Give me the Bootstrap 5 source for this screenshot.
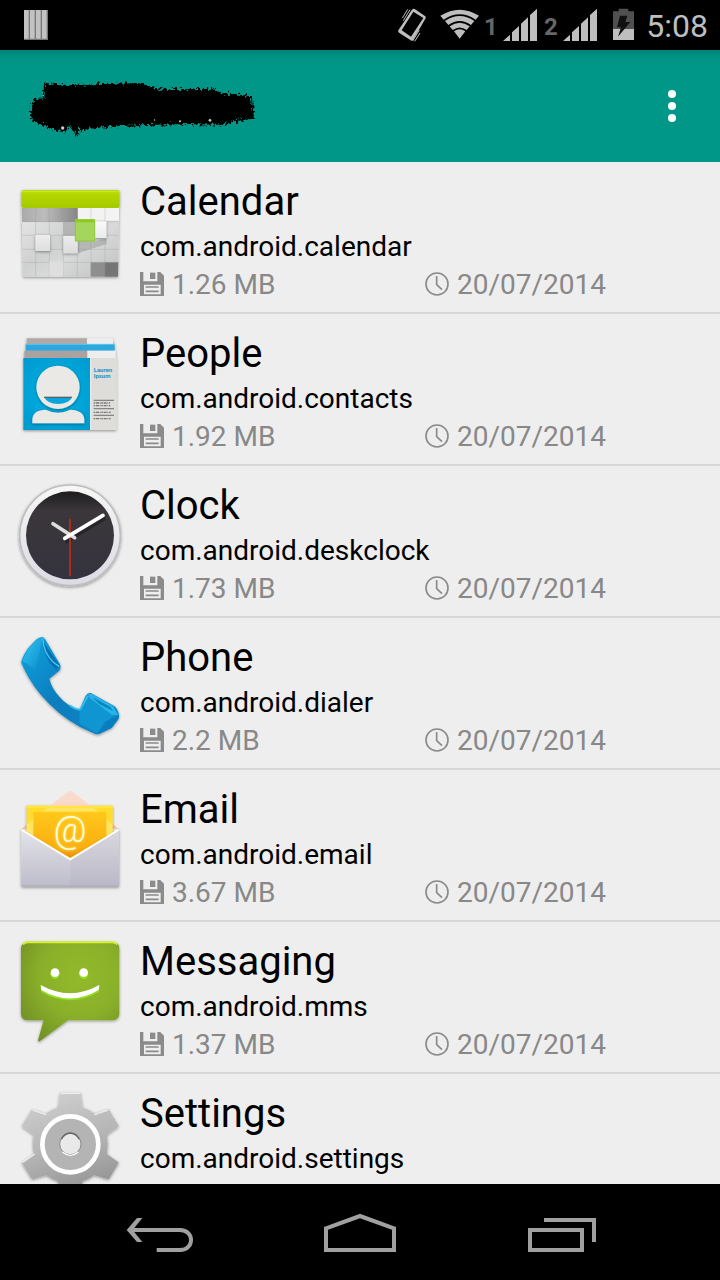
<!DOCTYPE html>
<html lang="en">
<head>
<meta charset="utf-8">
<meta name="viewport" content="width=device-width, initial-scale=1">
<title>Installed apps</title>
<link rel="stylesheet" href="https://cdn.jsdelivr.net/npm/bootstrap@5.3.0/dist/css/bootstrap.min.css">
<style>
body { font-family: Roboto, "Noto Sans", sans-serif; background: #eee; }
svg { display: block; flex: none; overflow: visible; }
.status-bar { background: #000; color: #bebebe; height: 50px; padding: 0 12px 0 24px; }
.status-icon { height: 50px; fill: #bebebe; }
.sim-label { width: 25px; font-size: 24px; line-height: 30px; padding-top: 4px; color: #666; }
.status-time { font-size: 32px; line-height: 50px; padding-top: 1px; margin-left: 12px; }
.wifi-icon { margin-left: 14px; }
.battery-icon { margin-left: 15px; }
.app-bar { background: linear-gradient(#008378, #009485 8px, #009788 24px); height: 112px; padding: 0 24px 0 28px; }
.overflow-btn { width: 48px; height: 48px; }
.app-list { min-height: 0; overflow-y: auto; scrollbar-width: none; }
.app-list::-webkit-scrollbar { display: none; }
.app-row { min-height: 152px; padding: 15px 10px 9px 0; border-bottom: 2px solid #d6d6d6; color: #000; }
.app-icon { width: 120px; height: 120px; margin: -5px 10px 0; }
.app-name { font-size: 40px; line-height: 50px; font-weight: 400; }
.app-package { font-size: 28px; line-height: 40px; }
.app-meta { font-size: 28px; line-height: 36px; color: #888; }
.meta-icon { width: 24px; height: 24px; margin-bottom: 2px; }
.nav-bar { background: #000; height: 96px; padding: 0 60px; }
.nav-bar svg { width: 80px; height: 56px; fill: none; stroke: #a0a0a0; stroke-width: 12; }
</style>
<script src="https://cdn.jsdelivr.net/npm/bootstrap@5.3.0/dist/js/bootstrap.bundle.min.js"></script>
</head>
<body>
<svg width="0" height="0" class="position-absolute" aria-hidden="true">
  <defs>
    <symbol id="disk" viewBox="0 0 72 72">
      <path fill="#8b8b8b" fill-rule="evenodd" d="M0 0H8V28H54V0H60L72 12V72H0ZM12 38V67H62V38Z"/>
      <path fill="#8b8b8b" fill-rule="evenodd" d="M30 2H46V21H30Z"/>
      <path fill="#8b8b8b" d="M0 0H10V30H0ZM52 0H60L72 12V30H52Z"/>
      <path stroke="#8b8b8b" stroke-width="5" d="M17 45H56M17 58H56"/>
    </symbol>
    <symbol id="time" viewBox="0 0 72 72">
      <circle cx="36" cy="36" r="33" fill="none" stroke="#8b8b8b" stroke-width="5"/>
      <path fill="none" stroke="#8b8b8b" stroke-width="5" d="M35 12V38L51 53"/>
    </symbol>
    <filter id="soft" x="-20%" y="-20%" width="140%" height="140%"><feDropShadow dx="0" dy="3" stdDeviation="4" flood-opacity=".4"/></filter>
    <filter id="glow" x="-30%" y="-30%" width="160%" height="160%"><feDropShadow dx="0" dy="0" stdDeviation="5" flood-color="#fff35a" flood-opacity="1"/></filter>
    <filter id="rough" x="-5%" y="-20%" width="110%" height="140%"><feTurbulence type="fractalNoise" baseFrequency=".12" numOctaves="3" seed="4"/><feDisplacementMap in="SourceGraphic" scale="26" xChannelSelector="R" yChannelSelector="G"/><feGaussianBlur stdDeviation="2"/></filter>
    <linearGradient id="lime" x2="0" y2="1"><stop stop-color="#b9dc00"/><stop offset="1" stop-color="#a5c900"/></linearGradient>
    <linearGradient id="paper" x2="0" y2="1"><stop stop-color="#fafafa"/><stop offset="1" stop-color="#dcdcdc"/></linearGradient>
    <linearGradient id="grid" x2="1" y2="1"><stop stop-color="#e9e9e9"/><stop offset=".45" stop-color="#cfd1d0"/><stop offset=".6" stop-color="#d8dad9"/><stop offset="1" stop-color="#bfc2c0"/></linearGradient>
    <linearGradient id="band" x2="1" y2="0"><stop stop-color="#aaa"/><stop offset=".4" stop-color="#bcbcbc"/><stop offset="1" stop-color="#868686"/></linearGradient>
    <radialGradient id="sky" cx=".5" cy=".5" r=".75"><stop stop-color="#05b4e6"/><stop offset="1" stop-color="#0397cc"/></radialGradient>
    <linearGradient id="rim" x2="0" y2="1"><stop stop-color="#f7f7f5"/><stop offset="1" stop-color="#dcdae4"/></linearGradient>
    <linearGradient id="dial" x2="0" y2="1"><stop stop-color="#1d1b1e"/><stop offset=".22" stop-color="#3b373b"/><stop offset="1" stop-color="#34323d"/></linearGradient>
    <linearGradient id="phoneBody" x2="1" y2="1"><stop stop-color="#11a3df"/><stop offset=".5" stop-color="#087dbd"/><stop offset="1" stop-color="#0987c8"/></linearGradient>
    <linearGradient id="phoneLit" x2="1" y2="1"><stop stop-color="#35c8f4"/><stop offset="1" stop-color="#0b8cca"/></linearGradient>
    <linearGradient id="letter" x2="0" y2="1"><stop stop-color="#ffc81a"/><stop offset=".8" stop-color="#fbae10"/><stop offset="1" stop-color="#e88d0c"/></linearGradient>
    <linearGradient id="flap" x2="0" y2="1"><stop stop-color="#ebe6e5"/><stop offset=".4" stop-color="#fbd8c8"/><stop offset="1" stop-color="#f5c4a6"/></linearGradient>
    <linearGradient id="envelope" x2="0" y2="1"><stop stop-color="#e4e4ea"/><stop offset="1" stop-color="#bdbcca"/></linearGradient>
    <radialGradient id="bubble" cx=".6" cy=".35" r=".8"><stop stop-color="#93b92c"/><stop offset=".5" stop-color="#8ab02a"/><stop offset="1" stop-color="#6d8b24"/></radialGradient>
    <linearGradient id="steel" gradientUnits="userSpaceOnUse" x1="150" y1="38" x2="250" y2="348"><stop stop-color="#cfcfcf"/><stop offset=".5" stop-color="#b5b5b5"/><stop offset="1" stop-color="#919191"/></linearGradient>
  </defs>
</svg>

<div class="d-flex flex-column vh-100 overflow-hidden">
  <div class="status-bar d-flex align-items-center flex-shrink-0">
    <svg class="me-auto" width="24" height="30" viewBox="0 0 72 90" aria-hidden="true">
      <path fill="#777" d="M0 0H72V90H0Z"/>
      <path fill="#c2c2c2" d="M0 0H14V86H0ZM18 0H32V86H18ZM36 0H50V86H36ZM54 0H68V86H54Z"/>
    </svg>
    <svg class="status-icon" width="28" viewBox="54 0 84 150" aria-hidden="true">
      <path fill-rule="evenodd" d="M98 27Q101 25 104 27L135 48Q139 51 137 55L99 120Q96 124 92 121L57 98Q53 95 55 91ZM100 35L65 91L93 110L130 54Z"/>
      <path fill="none" stroke="#bebebe" stroke-width="3" d="M67 54L83 28M70 62L90 29M72 72L96 31M98 123L118 90M104 124L120 99M95 119L115 85"/>
    </svg>
    <svg class="status-icon wifi-icon" width="38" viewBox="180 0 114 150" aria-hidden="true">
      <path d="M181 47Q239 11 297 47L287 59Q239 27 191 59ZM195 63Q239 33 283 63L273 75Q239 51 205 75ZM209 79Q239 57 269 79L260 90Q239 75 218 90ZM222 94Q239 82 256 94L239 116Z"/>
    </svg>
    <span class="sim-label fw-bold text-center">1</span>
    <svg class="status-icon" width="35" viewBox="369 0 105 150" aria-hidden="true">
      <path d="M369 123L390 104V123ZM396 97L417 78V123H396ZM423 71L444 52V123H423ZM450 45L471 26V123H450Z"/>
    </svg>
    <span class="sim-label fw-bold text-center">2</span>
    <svg class="status-icon" width="35" viewBox="369 0 105 150" aria-hidden="true">
      <path d="M369 123L390 104V123ZM396 97L417 78V123H396ZM423 71L444 52V123H423ZM450 45L471 26V123H450Z"/>
    </svg>
    <svg class="status-icon battery-icon" width="21" viewBox="699 0 63 150" aria-hidden="true">
      <path fill="#505050" d="M699 34H716V26H745V34H762V87H699Z"/><path d="M699 87H762V120H699Z"/>
      <path fill="#111" d="M720 47H742L736 66H751L714 110L723 82H711Z"/>
    </svg>
    <span class="status-time">5:08</span>
  </div>

  <header class="app-bar d-flex align-items-center justify-content-between flex-shrink-0">
    <svg width="232" height="60" viewBox="84 228 696 180" aria-hidden="true">
      <path filter="url(#rough)" d="M135 249L210 256L300 252L420 250L470 266L560 268L640 266L665 280L752 287L762 356L700 364L660 374L560 372L460 374L360 378L290 384L240 390L234 408L205 372L198 394L155 388L98 364L92 330L100 298L130 294Z"/>
      <path stroke="#000" stroke-width="3" d="M135 247L130 290M754 288L760 356M205 374L234 408"/>
      <g fill="#d9c5c5"><circle cx="188" cy="384" r="5"/><circle cx="540" cy="364" r="3"/><circle cx="630" cy="361" r="4"/><circle cx="130" cy="287" r="2"/><circle cx="464" cy="360" r="2"/></g>
    </svg>
    <button type="button" class="overflow-btn btn p-0 border-0 d-flex align-items-center justify-content-center" aria-label="More options">
      <svg width="8" height="32" viewBox="0 0 8 32" fill="#fff"><circle cx="4" cy="4" r="4"/><circle cx="4" cy="16" r="4"/><circle cx="4" cy="28" r="4"/></svg>
    </button>
  </header>

  <main class="app-list flex-grow-1">
    <a href="#calendar" class="app-row d-flex align-items-start text-decoration-none">
      <svg class="app-icon" viewBox="30 6 360 360" aria-hidden="true">
        <g filter="url(#soft)"><path fill="url(#grid)" d="M65 112H357L354 320H69Z"/><rect x="64" y="60" width="295" height="54" rx="6" fill="url(#lime)"/></g>
        <path d="M66 65H357" stroke="#c8e93c" stroke-width="3"/>
        <path fill="url(#band)" d="M65 114H233V156H66Z"/><path fill="#f3f3f3" d="M234 114H357V152H234Z"/>
        <path fill="#8f8f8f" opacity=".45" d="M190 156H228V196H190ZM234 212L282 214L320 206V222L234 250Z"/>
        <path fill="#8e8e8e" d="M272 277H313V320H272Z"/><path fill="#757575" d="M313 277H355L354 320H313Z"/>
        <path stroke="#999" stroke-opacity=".45" stroke-width="2" d="M107 114V320M148 114V320M190 114V320M232 114V320M273 114V320M315 114V320M67 155H356M67 196H356M67 238H356M67 277H356"/>
        <g fill="url(#paper)" filter="url(#soft)"><path d="M106 195H150V243H106ZM190 198H233V250H190ZM284 154H319V204H284Z"/></g>
        <path fill="#dedede" d="M148 274H190V320H148Z"/>
        <rect x="226" y="149" width="58" height="64" fill="#a5d65c" stroke="#8cc932" stroke-width="3"/><path fill="#8bcb1c" d="M225 149H284V157H225Z"/>
      </svg>
      <div class="flex-grow-1">
        <div class="app-name">Calendar</div>
        <div class="app-package">com.android.calendar</div>
        <div class="app-meta row g-0">
          <div class="col-6 d-flex align-items-center gap-2"><svg class="meta-icon"><use href="#disk"/></svg>1.26 MB</div>
          <div class="col-6 d-flex align-items-center gap-2"><svg class="meta-icon"><use href="#time"/></svg>20/07/2014</div>
        </div>
      </div>
    </a>
    <a href="#people" class="app-row d-flex align-items-start text-decoration-none">
      <svg class="app-icon" viewBox="30 -3 360 360" aria-hidden="true">
        <g filter="url(#soft)"><path fill="#b1a8a8" d="M80 40H262V60H80Z"/><path fill="#eee" d="M261 40H339V60H261Z"/><path fill="#2da7dc" d="M77 57H344V77H77Z"/><path fill="#aaa1a1" d="M73 77H263V100H73Z"/><path fill="#eee" d="M262 77H347V100H262Z"/><path fill="#deddd9" d="M270 99H349V315H270Z"/><path fill="url(#sky)" d="M70 99H271V315H70Z"/></g>
        <path stroke="#5cc8f2" stroke-width="3" d="M77 58H344"/>
        <g fill="#ebe9e6" filter="url(#soft)"><circle cx="174" cy="187" r="65"/><path d="M97 295V283Q99 255 137 254Q174 272 211 254Q251 256 253 283V295Z"/></g>
        <path fill="#0aa5dc" d="M133 217H216Q207 237 174 237Q142 237 133 217Z"/><path stroke="#53626c" stroke-width="4" d="M132 217H216"/>
        <path stroke="#f4f2ef" stroke-width="3" d="M272 100V314"/>
        <g font-weight="700" font-size="18" fill="#2492bd"><text x="281" y="140">Lauren</text><text x="281" y="159">Ipsum</text></g>
        <path stroke="#858585" stroke-width="4" d="M281 226H342M281 251H342M281 271H342"/>
        <path stroke="#777" stroke-width="4" stroke-dasharray="5 2 9 2 3 2" d="M281 234H330M281 242H331M281 262H333M281 281H334"/>
      </svg>
      <div class="flex-grow-1">
        <div class="app-name">People</div>
        <div class="app-package">com.android.contacts</div>
        <div class="app-meta row g-0">
          <div class="col-6 d-flex align-items-center gap-2"><svg class="meta-icon"><use href="#disk"/></svg>1.92 MB</div>
          <div class="col-6 d-flex align-items-center gap-2"><svg class="meta-icon"><use href="#time"/></svg>20/07/2014</div>
        </div>
      </div>
    </a>
    <a href="#clock" class="app-row d-flex align-items-start text-decoration-none">
      <svg class="app-icon" viewBox="30 3 360 360" aria-hidden="true">
        <circle cx="210" cy="181" r="151" fill="url(#rim)" stroke="#bdbdbd" stroke-width="5" filter="url(#soft)"/>
        <circle cx="210" cy="181" r="132" fill="url(#dial)"/>
        <path stroke="#000" stroke-opacity=".3" stroke-width="10" stroke-linecap="round" d="M200 200L312 132"/>
        <path stroke="#aa2c1c" stroke-width="6" d="M210 131V303"/>
        <path stroke="#dedede" stroke-width="11" stroke-linecap="round" d="M159 146L224 188"/>
        <path stroke="#fff" stroke-width="11" stroke-linecap="round" d="M194 190L309 121"/>
      </svg>
      <div class="flex-grow-1">
        <div class="app-name">Clock</div>
        <div class="app-package">com.android.deskclock</div>
        <div class="app-meta row g-0">
          <div class="col-6 d-flex align-items-center gap-2"><svg class="meta-icon"><use href="#disk"/></svg>1.73 MB</div>
          <div class="col-6 d-flex align-items-center gap-2"><svg class="meta-icon"><use href="#time"/></svg>20/07/2014</div>
        </div>
      </div>
    </a>
    <a href="#phone" class="app-row d-flex align-items-start text-decoration-none">
      <svg class="app-icon" viewBox="30 3 360 360" aria-hidden="true">
        <path filter="url(#soft)" fill="url(#phoneBody)" d="M127 30Q133 32 137 39L180 112Q184 124 178 131L148 155Q155 184 179 210Q202 238 239 248L257 207Q262 197 272 198L341 236Q352 242 357 263Q359 270 355 276L335 303L300 320Q292 323 284 320L240 300Q173 264 121 202Q86 160 64 108Q63 96 84 64L108 38Q118 30 127 30Z"/>
        <path fill="url(#phoneLit)" d="M67 101L86 64L108 39L126 32L123 55L112 103L105 127Z"/>
        <path fill="#0a6fb0" d="M126 40L177 113L170 129L150 109Q132 82 126 40Z"/>
        <path fill="none" stroke="#43c9f4" stroke-width="4" d="M128 34Q130 77 160 106L177 118"/>
        <path fill="#11a0da" d="M239 247L261 203L270 203L354 262L335 270L290 318L238 290Z" opacity=".65"/>
        <path fill="#26b5e8" d="M265 201L274 200L339 237L355 264L335 263L269 213Z"/><path fill="#0d86bd" d="M277 210L330 239L340 253L298 231Z"/>
        <path fill="none" stroke="#35c4ef" stroke-width="6" stroke-linecap="round" opacity=".8" d="M210 236Q232 251 242 246L263 208"/>
        <path fill="#0778ba" opacity=".55" d="M292 320L314 284L353 267L356 276L335 303Z"/>
      </svg>
      <div class="flex-grow-1">
        <div class="app-name">Phone</div>
        <div class="app-package">com.android.dialer</div>
        <div class="app-meta row g-0">
          <div class="col-6 d-flex align-items-center gap-2"><svg class="meta-icon"><use href="#disk"/></svg>2.2 MB</div>
          <div class="col-6 d-flex align-items-center gap-2"><svg class="meta-icon"><use href="#time"/></svg>20/07/2014</div>
        </div>
      </div>
    </a>
    <a href="#email" class="app-row d-flex align-items-start text-decoration-none">
      <svg class="app-icon" viewBox="30 0 360 360" aria-hidden="true">
        <path fill="url(#flap)" d="M64 147L200 38Q211 30 221 38L357 147Z"/>
        <path fill="#ffdc2e" d="M80 77H338V165L211 240L80 165Z" filter="url(#soft)"/>
        <path fill="#fff" opacity=".25" d="M80 134L150 77H273L338 134V165H80Z"/>
        <path fill="#ffe63c" d="M80 77H338V84H80Z"/>
        <path fill="url(#letter)" d="M100 95H319V170L211 233L100 170Z"/>
        <path fill="#fbd8c8" opacity=".7" d="M150 77L200 38Q211 30 221 38L273 77Z"/>
        <text x="210" y="186" text-anchor="middle" font-size="108" font-weight="300" fill="#fffde8" filter="url(#glow)">@</text>
        <path filter="url(#soft)" fill="url(#envelope)" d="M64 147L211 238L357 147V320H64Z"/>
        <path fill="#aaa8b8" opacity=".18" d="M211 240L357 150V320H211Z"/>
        <path fill="none" stroke="#fff" stroke-width="6" d="M66 150L211 238L355 150"/><path stroke="#a9a8b4" stroke-width="3" d="M65 318H356"/>
      </svg>
      <div class="flex-grow-1">
        <div class="app-name">Email</div>
        <div class="app-package">com.android.email</div>
        <div class="app-meta row g-0">
          <div class="col-6 d-flex align-items-center gap-2"><svg class="meta-icon"><use href="#disk"/></svg>3.67 MB</div>
          <div class="col-6 d-flex align-items-center gap-2"><svg class="meta-icon"><use href="#time"/></svg>20/07/2014</div>
        </div>
      </div>
    </a>
    <a href="#messaging" class="app-row d-flex align-items-start text-decoration-none">
      <svg class="app-icon" viewBox="30 6 360 360" aria-hidden="true">
        <path filter="url(#soft)" fill="url(#bubble)" d="M82 35H338Q357 36 358 55V252Q356 270 338 271H204L121 332Q112 339 115 328L131 271H82Q64 269 63 252V55Q65 36 82 35Z"/>
        <path fill="none" stroke="#d7ee35" stroke-width="6" d="M69 43Q74 37 84 37H336Q346 37 352 43"/>
        <g fill="#8fe01c" transform="translate(0 4)"><circle cx="165" cy="129" r="14"/><circle cx="251" cy="129" r="14"/><path d="M122 165Q210 214 298 165L296 182Q210 232 124 182Z"/></g>
        <g fill="#fff"><circle cx="165" cy="128" r="13"/><circle cx="251" cy="128" r="13"/><path d="M122 165Q210 214 298 165L296 180Q210 231 124 180Z"/></g>
      </svg>
      <div class="flex-grow-1">
        <div class="app-name">Messaging</div>
        <div class="app-package">com.android.mms</div>
        <div class="app-meta row g-0">
          <div class="col-6 d-flex align-items-center gap-2"><svg class="meta-icon"><use href="#disk"/></svg>1.37 MB</div>
          <div class="col-6 d-flex align-items-center gap-2"><svg class="meta-icon"><use href="#time"/></svg>20/07/2014</div>
        </div>
      </div>
    </a>
    <a href="#settings" class="app-row d-flex align-items-start text-decoration-none">
      <svg class="app-icon" viewBox="30 12 360 360" aria-hidden="true">
        <g filter="url(#soft)">
          <path fill="url(#steel)" stroke="url(#steel)" stroke-width="4" stroke-linejoin="round" d="M182 40H240L246 84Q266 90 283 103L325 90L354 138L318 164Q324 193 318 222L354 248L325 296L283 283Q266 296 246 302L240 346H182L176 302Q156 296 139 283L97 296L68 248L104 222Q98 193 104 164L68 138L97 90L139 103Q156 90 176 84Z"/>
        </g>
        <path fill="none" stroke="#eee" stroke-width="4" d="M183 40H240M98 90L139 104M283 104L324 90M68 247L104 222"/>
        <circle cx="211" cy="193" r="84" fill="#b4b4b4" stroke="#fff" stroke-width="14"/>
        <circle cx="211" cy="192" r="32" fill="#e9e9e9" stroke="#8a8a8a" stroke-width="3"/>
        <path fill="none" stroke="#fff" stroke-width="4" d="M187 216Q211 236 235 216"/><path fill="none" stroke="#666" stroke-width="4" d="M184 178Q193 160 211 159Q229 160 238 178"/>
      </svg>
      <div class="flex-grow-1">
        <div class="app-name">Settings</div>
        <div class="app-package">com.android.settings</div>
      </div>
    </a>
  </main>

  <nav class="nav-bar d-flex flex-shrink-0" aria-label="System">
    <button type="button" class="btn border-0 p-0 flex-fill d-flex align-items-center justify-content-center" aria-label="Back">
      <svg viewBox="60 42 240 168"><path d="M94 120H240C284 120 284 180 240 180H170"/><path fill="#a0a0a0" stroke="none" d="M80 120L111 84H127L98 120L127 156H111Z"/></svg>
    </button>
    <button type="button" class="btn border-0 p-0 flex-fill d-flex align-items-center justify-content-center" aria-label="Home">
      <svg viewBox="660 42 240 168"><path d="M678 180V115L780 78L882 115V180Z"/></svg>
    </button>
    <button type="button" class="btn border-0 p-0 flex-fill d-flex align-items-center justify-content-center" aria-label="Recent apps">
      <svg viewBox="1260 42 240 168"><path d="M1290 120H1446V180H1290ZM1332 90H1482V156"/></svg>
    </button>
  </nav>
</div>
</body>
</html>
